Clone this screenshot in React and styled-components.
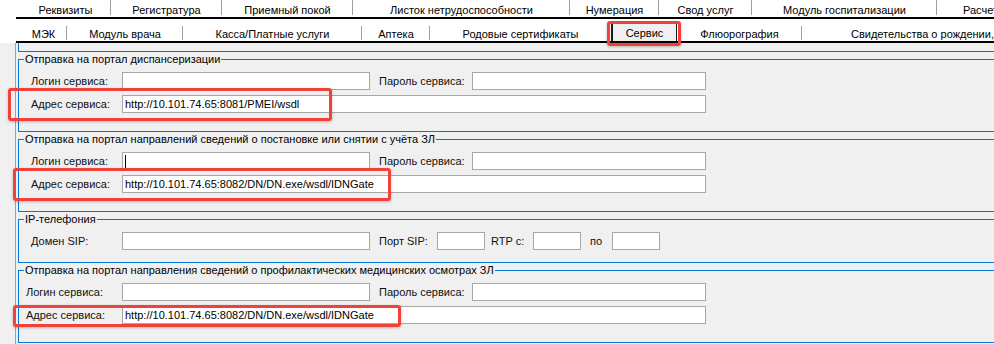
import React from 'react';
import styled, { createGlobalStyle } from 'styled-components';

const GlobalStyle = createGlobalStyle`
    html, body {
        margin: 0;
        padding: 0;
    }
    body {
        background: #f0f0f0;
        font-family: "Liberation Sans", Arial, sans-serif;
        font-size: 11px;
        color: #000;
    }
`;

const topTabs = [
    { label: 'Реквизиты', w: 91 },
    { label: 'Регистратура', w: 111 },
    { label: 'Приемный покой', w: 131 },
    { label: 'Листок нетрудоспособности', w: 217 },
    { label: 'Нумерация', w: 89 },
    { label: 'Свод услуг', w: 93 },
    { label: 'Модуль госпитализации', w: 185 },
    { label: 'Расчеты', w: 120, lead: 26 },
];

const bottomTabs = [
    { label: 'МЭК', w: 47 },
    { label: 'Модуль врача', w: 116 },
    { label: 'Касса/Платные услуги', w: 179 },
    { label: 'Аптека', w: 68 },
    { label: 'Родовые сертификаты', w: 181, noSep: true },
    { label: 'Сервис', w: 66, active: true },
    { label: 'Флюорография', w: 125 },
    { label: 'Свидетельства о рождении, смерти', w: 250, lead: 49 },
];

function App () {
    return (
        <Window>
            <GlobalStyle />
            <TabStrip>
                <TabRow $h={17}>
                    {topTabs.map(t => (
                        <Tab key={t.label} $w={t.w} $lead={t.lead} $pt={3} $sepTop={0} $sepH={15}>{t.label}</Tab>
                    ))}
                </TabRow>
                <TabRow $h={22}>
                    {bottomTabs.map(t => t.active ? (
                        <ActiveTab key={t.label} $w={t.w}>{t.label}</ActiveTab>
                    ) : (
                        <Tab key={t.label} $w={t.w} $lead={t.lead} $pt={8} $sepTop={7} $sepH={t.noSep ? 0 : 14}>{t.label}</Tab>
                    ))}
                </TabRow>
            </TabStrip>

            <Panel>
                <GroupTail />

                <Group $pb={18}>
                    <Legend>Отправка на портал диспансеризации</Legend>
                    <Rows>
                        <Row>
                            <Label $w={103} $indent={12}>Логин сервиса:</Label>
                            <Field $w={248} />
                            <Label $w={102} $indent={9}>Пароль сервиса:</Label>
                            <Field $w={234} />
                        </Row>
                        <Row>
                            <Label $w={103} $indent={12}>Адрес сервиса:</Label>
                            <Field $w={584}>http://10.101.74.65:8081/PMEI/wsdl</Field>
                        </Row>
                    </Rows>
                </Group>

                <Group $pb={18}>
                    <Legend>Отправка на портал направлений сведений о постановке или снятии с учёта ЗЛ</Legend>
                    <Rows>
                        <Row>
                            <Label $w={103} $indent={12}>Логин сервиса:</Label>
                            <Field $w={248}><Caret /></Field>
                            <Label $w={102} $indent={9}>Пароль сервиса:</Label>
                            <Field $w={234} />
                        </Row>
                        <Row>
                            <Label $w={103} $indent={12}>Адрес сервиса:</Label>
                            <Field $w={584}>http://10.101.74.65:8082/DN/DN.exe/wsdl/IDNGate</Field>
                        </Row>
                    </Rows>
                </Group>

                <Group $pb={12}>
                    <Legend>IP-телефония</Legend>
                    <Rows>
                        <Row>
                            <Label $w={103} $indent={12}>Домен SIP:</Label>
                            <Field $w={248} />
                            <Label $w={67} $indent={9}>Порт SIP:</Label>
                            <Field $w={48} />
                            <Label $w={48} $indent={6}>RTP с:</Label>
                            <Field $w={48} />
                            <Label $w={31} $indent={9}>по</Label>
                            <Field $w={48} />
                        </Row>
                    </Rows>
                </Group>

                <Group $pb={18}>
                    <Legend>Отправка на портал направления сведений о профилактических медицинских осмотрах ЗЛ</Legend>
                    <Rows>
                        <Row>
                            <Label $w={103} $indent={7}>Логин сервиса:</Label>
                            <Field $w={248} />
                            <Label $w={102} $indent={9}>Пароль сервиса:</Label>
                            <Field $w={234} />
                        </Row>
                        <Row>
                            <Label $w={103} $indent={7}>Адрес сервиса:</Label>
                            <Field $w={584}>http://10.101.74.65:8082/DN/DN.exe/wsdl/IDNGate</Field>
                        </Row>
                    </Rows>
                </Group>
            </Panel>

            {/* red annotation frames drawn over the screenshot */}
            <Highlight $x={8} $y={88} $w={324} $h={33} />
            <Highlight $x={13} $y={168} $w={378} $h={33} />
            <Highlight $x={13} $y={305} $w={388} $h={22} />
            <Highlight $x={607} $y={21} $w={74} $h={25} />
        </Window>
    );
}

const Window = styled.div`
    position: relative;
    width: 994px;
    height: 344px;
    overflow: hidden;
    background: #f0f0f0;
`;

const TabStrip = styled.div`
    background: #fff;
    padding-left: 16px;
`;

const TabRow = styled.div`
    display: flex;
    height: ${p => p.$h}px;
    padding-left: 4px;
    border-bottom: 2px solid #000;
    overflow: hidden;
`;

const Tab = styled.div`
    flex: none;
    width: ${p => p.$w}px;
    box-sizing: border-box;
    padding-top: ${p => p.$pt}px;
    padding-left: ${p => p.$lead || 0}px;
    line-height: 14px;
    text-align: ${p => p.$lead ? 'left' : 'center'};
    white-space: nowrap;
    overflow: hidden;
    background: linear-gradient(#a0a0a0, #a0a0a0) no-repeat right 0 top ${p => p.$sepTop}px / 1px ${p => p.$sepH}px;
`;

const ActiveTab = styled.div`
    flex: none;
    width: ${p => p.$w}px;
    box-sizing: border-box;
    margin-top: 4px;
    padding-top: 3px;
    line-height: 14px;
    text-align: center;
    white-space: nowrap;
    background: #f0f0f0;
    border-left: 2px solid #1a1a1a;
    border-right: 1px solid #1a1a1a;
`;

const Panel = styled.div`
    display: flex;
    flex-direction: column;
    gap: 1px;
    margin-left: 15px;
    padding-left: 2px;
    border-left: 1px solid #a0a0a0;
    height: 301px;
`;

const GroupTail = styled.div`
    flex: none;
    width: 1000px;
    height: 9px;
    box-sizing: border-box;
    border: 1px solid #0078d7;
    border-top: 0;
`;

const Group = styled.fieldset`
    flex: none;
    width: 1000px;
    box-sizing: border-box;
    margin: 0;
    min-width: 0;
    padding: 6px 0 ${p => p.$pb}px;
    border: 1px solid #0078d7;
`;

const Legend = styled.legend`
    margin-left: 5px;
    padding: 0 1px;
    line-height: 13px;
    font-size: 11px;
    white-space: nowrap;
`;

const Rows = styled.div`
    display: flex;
    flex-direction: column;
    gap: 5px;
`;

const Row = styled.div`
    display: flex;
    align-items: center;
    height: 18px;
`;

const Label = styled.span`
    flex: none;
    width: ${p => p.$w}px;
    box-sizing: border-box;
    padding-left: ${p => p.$indent}px;
    white-space: nowrap;
    color: #111;
`;

const Field = styled.div`
    flex: none;
    display: flex;
    align-items: center;
    width: ${p => p.$w}px;
    height: 18px;
    box-sizing: border-box;
    padding-left: 2px;
    border: 1px solid #a7a7a7;
    background: #fff;
    line-height: 16px;
    white-space: nowrap;
`;

const Caret = styled.span`
    display: block;
    width: 1px;
    height: 13px;
    background: #000;
`;

const Highlight = styled.div`
    position: absolute;
    left: ${p => p.$x}px;
    top: ${p => p.$y}px;
    width: ${p => p.$w}px;
    height: ${p => p.$h}px;
    box-sizing: border-box;
    border: 3px solid #f2403a;
    border-radius: 3px;
    box-shadow: 0 1px 3px rgba(0, 0, 0, 0.25);
    pointer-events: none;
`;

export default App;
